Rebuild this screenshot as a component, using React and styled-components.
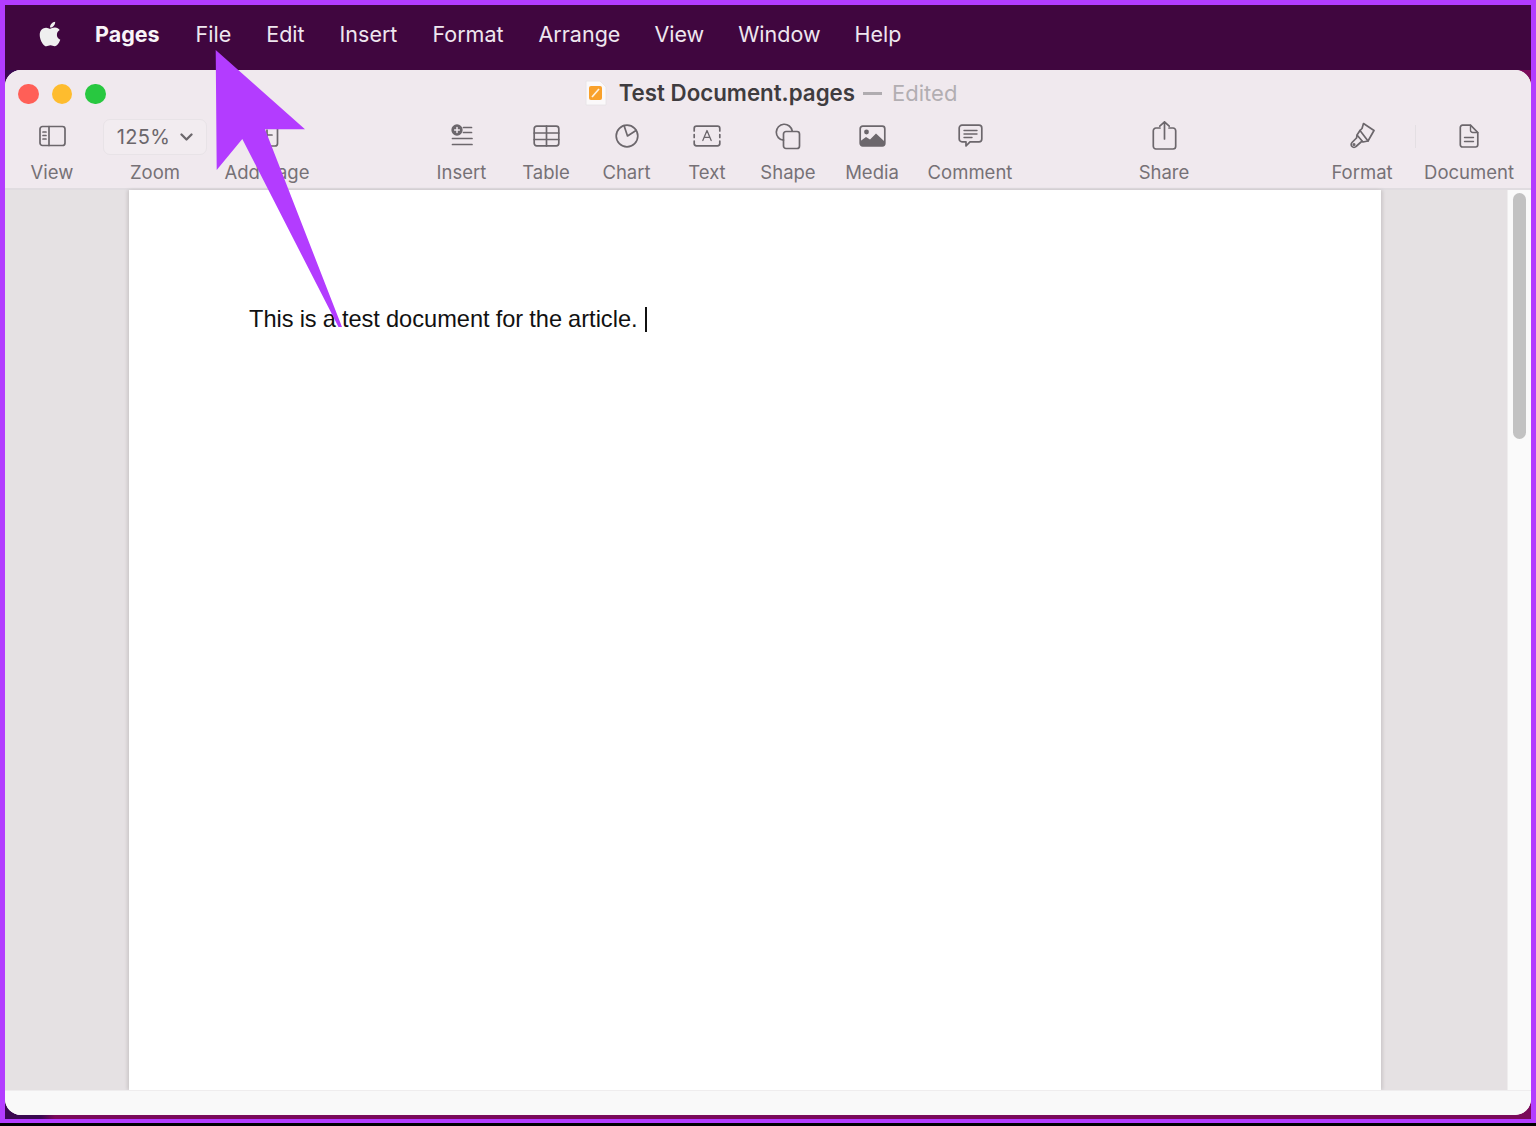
import React from "react";
import styled, { createGlobalStyle } from "styled-components";
import { FaApple } from "react-icons/fa";

const UI_FONT = `Inter, "Noto Sans", "Liberation Sans", sans-serif`;

const GlobalStyle = createGlobalStyle`
  html, body {
    margin: 0;
    padding: 0;
    background: #000;
  }
  body {
    width: 1536px;
    height: 1126px;
    overflow: hidden;
    font-family: ${UI_FONT};
  }
`;

const Frame = styled.div`
  position: relative;
  box-sizing: border-box;
  width: 1536px;
  height: 1123px;
  border: solid #b33cff;
  border-width: 5px 5px 4px 5px;
  background: linear-gradient(to right, #3a0850 0, #3a0850 36px, #7a0a5a 50px, #7a0a5a 100%);
  padding-bottom: 4px;
  display: flex;
  flex-direction: column;
`;

const MenuBar = styled.div`
  box-sizing: border-box;
  height: 65px;
  flex: none;
  background: #40063f;
  display: flex;
  align-items: center;
  padding: 0 0 8px 32px;
  color: #f3ecf3;
  font-size: 21.5px;
`;

const AppleMark = styled(FaApple)`
  width: 26px;
  height: 28px;
  color: #efefef;
  margin-right: 32px;
`;

const MenuItem = styled.span`
  margin-right: ${(p) => p.$gap || 35}px;
  font-weight: ${(p) => (p.$bold ? 700 : 400)};
  color: ${(p) => (p.$bold ? "#f8f4f8" : "#efe6ef")};
`;

const Window = styled.div`
  flex: 1;
  min-height: 0;
  display: flex;
  flex-direction: column;
  border-radius: 16px;
  overflow: hidden;
  background: #f9f9f9;
`;

const TitleBar = styled.div`
  height: 45px;
  flex: none;
  background: #f0e9ee;
  display: grid;
  grid-template-columns: 1fr auto 1fr;
  align-items: center;
  padding: 0 14px 0 13px;
  box-sizing: border-box;
`;

const Lights = styled.div`
  display: flex;
  gap: 13px;
  margin-top: 3px;
`;

const Light = styled.span`
  width: 20.5px;
  height: 20.5px;
  border-radius: 50%;
  background: ${(p) => p.$color};
`;

const Title = styled.div`
  display: flex;
  align-items: center;
  margin-left: 7px;
  font-size: 22.3px;
  font-weight: 600;
  color: #3f3c3f;
`;

const Dash = styled.span`
  width: 19px;
  height: 3px;
  background: #b0acb0;
  margin: 2px 10px 0 8px;
`;

const Edited = styled.span`
  font-size: 22px;
  font-weight: 400;
  color: #b2aeb2;
`;

const Toolbar = styled.div`
  height: 73px;
  flex: none;
  background: #f0e9ee;
  border-bottom: 2px solid #e0dce0;
  box-sizing: content-box;
  display: flex;
`;

const Group = styled.div`
  display: flex;
  margin-left: ${(p) => p.$before || 0}px;
`;

const Tool = styled.div`
  position: relative;
  width: ${(p) => p.$w}px;
  display: flex;
  flex-direction: column;
  align-items: center;
`;

const ToolIcon = styled.div`
  height: 42px;
  display: flex;
  align-items: center;
  justify-content: center;
`;

const ToolLabel = styled.span`
  margin-top: ${(p) => (p.$pill ? 6 : 4)}px;
  font-size: 18.5px;
  line-height: 22px;
  color: #767176;
  white-space: nowrap;
`;

const ZoomPill = styled.div`
  box-sizing: border-box;
  width: 104px;
  height: 36px;
  margin-top: 4px;
  display: flex;
  align-items: center;
  justify-content: center;
  gap: 10px;
  border: 1.5px solid #e8e3e7;
  border-radius: 7px;
  background: #f2ecf0;
  font-size: 20px;
  color: #6b666b;
  letter-spacing: 0.4px;
`;

const Divider = styled.span`
  position: absolute;
  right: -7px;
  top: 10px;
  width: 1px;
  height: 23px;
  background: #e4dfe3;
`;

const Glyph = styled.svg`
  display: block;
  width: ${(p) => p.$w}px;
  height: ${(p) => p.$h}px;
  fill: none;
  stroke: #6c676c;
  stroke-width: ${(p) => p.$stroke || 1.7};
  stroke-linecap: round;
  stroke-linejoin: round;
`;

const Canvas = styled.div`
  flex: 1;
  min-height: 0;
  display: flex;
`;

const Desk = styled.div`
  flex: 1;
  background: #e5e1e3;
  display: flex;
  justify-content: center;
  padding-right: 2px;
`;

const Sheet = styled.div`
  box-sizing: border-box;
  width: 1252px;
  background: #fff;
  box-shadow: -2px 0 3px #cdc9cb, 2px 0 3px #cdc9cb;
  padding: 112px 0 0 120px;
  font-family: "Liberation Sans", Arial, sans-serif;
  font-size: 23.6px;
  word-spacing: -0.5px;
  line-height: 34px;
  color: #111;
`;

const Caret = styled.span`
  display: inline-block;
  width: 2px;
  height: 25px;
  margin-left: 7px;
  vertical-align: -5px;
  background: #111;
`;

const ScrollTrack = styled.div`
  width: 24px;
  flex: none;
  background: #fafafa;
  border-left: 1px solid #efedee;
  box-sizing: border-box;
  padding: 3px 5px 0 5px;
`;

const ScrollThumb = styled.div`
  width: 13px;
  height: 246px;
  border-radius: 7px;
  background: #c2c2c2;
`;

const StatusBar = styled.div`
  height: 25px;
  flex: none;
  background: #f9f9f9;
  border-top: 1px solid #efedee;
  box-sizing: border-box;
`;

const Pointer = styled.svg`
  position: absolute;
  left: -5px;
  top: -5px;
  width: 1536px;
  height: 1126px;
  pointer-events: none;
`;

const ViewIcon = () => (
  <Glyph $w={27} $h={22} viewBox="0 0 27 22">
    <rect x="1" y="1.5" width="25" height="19" rx="2.5" />
    <path d="M10 1.5v19M4 7h3M4 10.5h3M4 14h3" />
  </Glyph>
);

const AddPageIcon = () => (
  <Glyph $w={24} $h={24} viewBox="0 0 24 24">
    <rect x="1.5" y="1" width="21" height="21" rx="2.5" />
    <path d="M12 6v10M7 11h10" />
  </Glyph>
);

const InsertIcon = () => (
  <Glyph $w={22} $h={24} viewBox="0 0 22 24">
    <circle cx="6" cy="6" r="4.8" fill="#6c676c" />
    <path d="M6 3.6v4.8M3.6 6h4.8" stroke="#f0e9ee" strokeWidth="1.5" />
    <path d="M12.5 3.5h8M12.5 8.5h8M1.5 14.5h19.5M1.5 20.5h19.5" />
  </Glyph>
);

const TableIcon = () => (
  <Glyph $w={27} $h={22} viewBox="0 0 27 22">
    <rect x="1.2" y="1.2" width="24.6" height="19.6" rx="2.5" />
    <path d="M1.2 8h24.6M1.2 14.5h24.6M13.5 1.2v19.6" />
  </Glyph>
);

const ChartIcon = () => (
  <Glyph $w={24} $h={24} viewBox="0 0 24 24">
    <circle cx="12" cy="12" r="10.8" />
    <path d="M9 1.5L12.500 12L21 6.500" />
  </Glyph>
);

const TextIcon = () => (
  <Glyph $w={28} $h={22} viewBox="0 0 28 22">
    <path d="M1.2 6V3.5a2.3 2.3 0 0 1 2.3-2.3h21a2.3 2.3 0 0 1 2.3 2.3V6M1.2 9.5v3M26.8 9.5v3M1.2 16v2.5a2.3 2.3 0 0 0 2.3 2.3h21a2.3 2.3 0 0 0 2.3-2.3V16" />
    <path d="M9.8 15.5L14 5.5L18.2 15.5M11.2 12.3h5.6" strokeWidth="1.3" />
  </Glyph>
);

const ShapeIcon = () => (
  <Glyph $w={26} $h={27} viewBox="0 0 26 27">
    <path d="M8.5 17.2A8 8 0 1 1 17.2 8" />
    <rect x="8.5" y="8.5" width="16" height="17" rx="2.5" />
  </Glyph>
);

const MediaIcon = () => (
  <Glyph $w={27} $h={22} viewBox="0 0 27 22">
    <rect x="1.2" y="1.2" width="24.6" height="19.6" rx="2.5" />
    <circle cx="7.5" cy="7" r="2.4" fill="#6c676c" stroke="none" />
    <path d="M1.5 19.5V16l5.5-4 4 2.5 6-6 8.5 8v3a1.5 1.5 0 0 1-1 1H2.5z" fill="#6c676c" stroke="none" />
  </Glyph>
);

const CommentIcon = () => (
  <Glyph $w={25} $h={24} viewBox="0 0 25 24">
    <path d="M4 1.2h17a2.8 2.8 0 0 1 2.8 2.8v11a2.8 2.8 0 0 1-2.8 2.8H12l-4 4.2v-4.2H4A2.8 2.8 0 0 1 1.2 15V4A2.8 2.8 0 0 1 4 1.2z" />
    <path d="M6 6.5h13M6 10h13M6 13.5h8" strokeWidth="1.4" />
  </Glyph>
);

const ShareIcon = () => (
  <Glyph $w={25} $h={31} viewBox="0 0 25 31">
    <path d="M8 7H4a2.700 2.700 0 0 0-2.700 2.700v15.600A2.700 2.700 0 0 0 4 28h17a2.700 2.700 0 0 0 2.700-2.700V9.700A2.700 2.700 0 0 0 21 7h-4" />
    <path d="M12.500 18V1M7.800 5.200L12.500 .8l4.700 4.400" />
  </Glyph>
);

const FormatIcon = () => (
  <Glyph $w={26} $h={28} viewBox="0 0 26 28">
    <path d="M14.500 1.500L25 8.500L19 19L11 8.500L13 6.500z" />
    <path d="M11 8.500L8 13L14 20L19 19" />
    <path d="M8 13.500L7.500 16L3 20.500a2.800 2.800 0 0 0 4 4L12 20L13.500 19.500" />
    <circle cx="5" cy="22.500" r="0.7" fill="#6c676c" />
  </Glyph>
);

const DocumentIcon = () => (
  <Glyph $w={20} $h={24} viewBox="0 0 20 24">
    <path d="M3.500 1.200h8L18.800 8.500v12.300a2.200 2.200 0 0 1-2.200 2.200H3.500a2.200 2.200 0 0 1-2.200-2.200V3.400a2.200 2.200 0 0 1 2.200-2.200z" />
    <path d="M11.500 1.200v5a2.200 2.200 0 0 0 2.200 2.300h5M5.500 13.500h9M5.500 17.500h9" strokeWidth="1.4" />
  </Glyph>
);

const Chevron = () => (
  <Glyph $w={13} $h={8} $stroke={2.3} viewBox="0 0 13 8">
    <path d="M1.500 1.500L6.500 6.500l5-5" />
  </Glyph>
);

const PagesFile = styled.svg`
  width: 22px;
  height: 26px;
  margin-right: 12px;
`;

const PagesFileIcon = () => (
  <PagesFile viewBox="0 0 22 26">
    <path d="M1 1h14l6 6v18H1z" fill="#fbf9fa" stroke="#e6e2e5" strokeWidth="0.8" />
    <rect x="4" y="6" width="13" height="14" rx="2" fill="#f9a12b" />
    <path d="M7 17l7-8" stroke="#fff3e0" strokeWidth="1.6" />
  </PagesFile>
);

const leftTools = [
  { w: 94, label: "View", icon: <ViewIcon /> },
  { w: 112, label: "Zoom", pill: true },
  { w: 112, label: "Add Page", icon: <AddPageIcon /> },
];

const middleTools = [
  { w: 83, label: "Insert", icon: <InsertIcon /> },
  { w: 86, label: "Table", icon: <TableIcon /> },
  { w: 75, label: "Chart", icon: <ChartIcon /> },
  { w: 86, label: "Text", icon: <TextIcon /> },
  { w: 76, label: "Shape", icon: <ShapeIcon /> },
  { w: 92, label: "Media", icon: <MediaIcon /> },
  { w: 104, label: "Comment", icon: <CommentIcon /> },
];

const renderTool = (t) => (
  <Tool key={t.label} $w={t.w}>
    {t.divider && <Divider />}
    {t.pill ? (
      <ZoomPill>
        125%
        <Chevron />
      </ZoomPill>
    ) : (
      <ToolIcon>{t.icon}</ToolIcon>
    )}
    <ToolLabel $pill={t.pill}>{t.label}</ToolLabel>
  </Tool>
);

const menus = [
  { label: "File" },
  { label: "Edit" },
  { label: "Insert" },
  { label: "Format" },
  { label: "Arrange", gap: 34 },
  { label: "View", gap: 34 },
  { label: "Window", gap: 34 },
  { label: "Help" },
];

export default function App() {
  return (
    <>
      <GlobalStyle />
      <Frame>
        <MenuBar>
          <AppleMark />
          <MenuItem $bold $gap={36}>Pages</MenuItem>
          {menus.map((m) => (
            <MenuItem key={m.label} $gap={m.gap}>{m.label}</MenuItem>
          ))}
        </MenuBar>
        <Window>
          <TitleBar>
            <Lights>
              <Light $color="#ff5f57" />
              <Light $color="#febc2e" />
              <Light $color="#28c840" />
            </Lights>
            <Title>
              <PagesFileIcon />
              Test Document.pages
              <Dash />
              <Edited>Edited</Edited>
            </Title>
          </TitleBar>
          <Toolbar>
            <Group>{leftTools.map(renderTool)}</Group>
            <Group $before={97}>{middleTools.map(renderTool)}</Group>
            <Group $before={102}>{renderTool({ w: 80, label: "Share", icon: <ShareIcon /> })}</Group>
            <Group $before={111}>
              {renderTool({ w: 94, label: "Format", icon: <FormatIcon />, divider: true })}
              {renderTool({ w: 120, label: "Document", icon: <DocumentIcon /> })}
            </Group>
          </Toolbar>
          <Canvas>
            <Desk>
              <Sheet>
                This is a test document for the article.
                <Caret />
              </Sheet>
            </Desk>
            <ScrollTrack>
              <ScrollThumb />
            </ScrollTrack>
          </Canvas>
          <StatusBar />
        </Window>
        <Pointer viewBox="0 0 1536 1126">
          <path d="M215.700 50L305 129.300L265 129.300L342 327L338.500 327L242.300 139L216.700 170Z" fill="#b33cff" />
        </Pointer>
      </Frame>
    </>
  );
}
